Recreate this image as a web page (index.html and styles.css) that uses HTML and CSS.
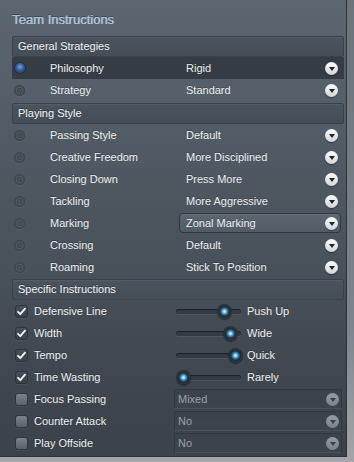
FILE: index.html
```html
<!DOCTYPE html>
<html>
<head>
<meta charset="utf-8">
<link rel="stylesheet" href="styles.css">
</head>
<body>
<div class="window">
  <h1 class="title">Team Instructions</h1>

  <section class="group">
    <div class="group-head">General Strategies</div>
    <div class="row sel"><span class="radio on"></span><span class="label">Philosophy</span><span class="select"><span class="val">Rigid</span><span class="arrow"></span></span></div>
    <div class="row"><span class="radio"></span><span class="label">Strategy</span><span class="select"><span class="val">Standard</span><span class="arrow"></span></span></div>
  </section>

  <section class="group g2">
    <div class="group-head">Playing Style</div>
    <div class="row"><span class="radio"></span><span class="label">Passing Style</span><span class="select"><span class="val">Default</span><span class="arrow"></span></span></div>
    <div class="row"><span class="radio"></span><span class="label">Creative Freedom</span><span class="select"><span class="val">More Disciplined</span><span class="arrow"></span></span></div>
    <div class="row"><span class="radio"></span><span class="label">Closing Down</span><span class="select"><span class="val">Press More</span><span class="arrow"></span></span></div>
    <div class="row"><span class="radio"></span><span class="label">Tackling</span><span class="select"><span class="val">More Aggressive</span><span class="arrow"></span></span></div>
    <div class="row"><span class="radio"></span><span class="label">Marking</span><span class="select boxed"><span class="val">Zonal Marking</span><span class="arrow"></span></span></div>
    <div class="row"><span class="radio"></span><span class="label">Crossing</span><span class="select"><span class="val">Default</span><span class="arrow"></span></span></div>
    <div class="row"><span class="radio"></span><span class="label">Roaming</span><span class="select"><span class="val">Stick To Position</span><span class="arrow"></span></span></div>
  </section>

  <section class="group g3">
    <div class="group-head">Specific Instructions</div>
    <div class="srow"><span class="check on"><svg viewBox="0 0 13 13" width="13" height="13"><path d="M3 6.8 L5.3 9.2 L10 3.6" fill="none" stroke="#f4f6f8" stroke-width="1.8" stroke-linecap="round" stroke-linejoin="round"/></svg></span><span class="label">Defensive Line</span><span class="slider"><span class="track"><span class="knob" style="left:41px"></span></span><span class="sval">Push Up</span></span></div>
    <div class="srow"><span class="check on"><svg viewBox="0 0 13 13" width="13" height="13"><path d="M3 6.8 L5.3 9.2 L10 3.6" fill="none" stroke="#f4f6f8" stroke-width="1.8" stroke-linecap="round" stroke-linejoin="round"/></svg></span><span class="label">Width</span><span class="slider"><span class="track"><span class="knob" style="left:47px"></span></span><span class="sval">Wide</span></span></div>
    <div class="srow"><span class="check on"><svg viewBox="0 0 13 13" width="13" height="13"><path d="M3 6.8 L5.3 9.2 L10 3.6" fill="none" stroke="#f4f6f8" stroke-width="1.8" stroke-linecap="round" stroke-linejoin="round"/></svg></span><span class="label">Tempo</span><span class="slider"><span class="track"><span class="knob" style="left:52px"></span></span><span class="sval">Quick</span></span></div>
    <div class="srow"><span class="check on"><svg viewBox="0 0 13 13" width="13" height="13"><path d="M3 6.8 L5.3 9.2 L10 3.6" fill="none" stroke="#f4f6f8" stroke-width="1.8" stroke-linecap="round" stroke-linejoin="round"/></svg></span><span class="label">Time Wasting</span><span class="slider"><span class="track"><span class="knob" style="left:0px"></span></span><span class="sval">Rarely</span></span></div>
    <div class="srow"><span class="check"></span><span class="label">Focus Passing</span><span class="dis"><span class="val">Mixed</span><span class="arrow off"></span></span></div>
    <div class="srow"><span class="check"></span><span class="label">Counter Attack</span><span class="dis"><span class="val">No</span><span class="arrow off"></span></span></div>
    <div class="srow"><span class="check"></span><span class="label">Play Offside</span><span class="dis"><span class="val">No</span><span class="arrow off"></span></span></div>
  </section>
</div>
</body>
</html>
```

FILE: styles.css
```css
* { box-sizing: border-box; margin: 0; padding: 0; }

body {
  width: 354px;
  height: 462px;
  overflow: hidden;
  background: linear-gradient(180deg, #6b737b 0%, #7d848b 70%, #a3a7ab 100%);
  font-family: "Liberation Sans", Arial, sans-serif;
  font-size: 11px;
  color: #eef1f3;
}

.window {
  width: 347px;
  height: 457px;
  padding: 0 2px 0 12px;
  background: linear-gradient(180deg, #5c6670 0%, #535d67 25%, #4a525b 55%, #40474f 80%, #3b4249 100%);
  border-right: 1px solid #2c3237;
  border-bottom: 1px solid #2c3237;
}

.title {
  height: 36px;
  line-height: 39px;
  font-size: 13px;
  font-weight: normal;
  color: #abc2da;
  text-shadow: 0.5px 0 0 #abc2da, 0 -1px 0 rgba(40, 46, 52, 0.6);
}

.group-head {
  height: 21px;
  line-height: 19px;
  padding-left: 5px;
  background: linear-gradient(180deg, #4b545e, #454e57);
  border: 1px solid #39414a;
  border-radius: 2px;
  box-shadow: inset 0 1px 0 rgba(255, 255, 255, 0.05);
  color: #f3f5f7;
  text-shadow: 0 -1px 0 rgba(0, 0, 0, 0.3);
}

.g2 { margin-top: 2px; }
.g3 { margin-top: 1px; }

.row {
  display: grid;
  grid-template-columns: 38px 129px 1fr;
  align-items: center;
  height: 22px;
  padding-right: 3px;
  text-shadow: 0 -1px 0 rgba(0, 0, 0, 0.25);
}

.row.sel {
  background: #363c44;
}

.radio {
  width: 11px;
  height: 11px;
  margin-left: 2px;
  border-radius: 50%;
  background: radial-gradient(circle, #48505a 0 1.5px, #3b424a 2.2px, #525a63 3.2px, #444c55 4px, #3a4148 5.5px);
  box-shadow: 0 1px 0 rgba(255, 255, 255, 0.05);
}

.radio.on {
  width: 10px;
  height: 10px;
  margin-left: 3px;
  background: radial-gradient(circle at 50% 40%, #6d92d2 0 1px, #3f64a6 3px, #2d4b80 5px);
  box-shadow: 0 0 0 1px rgba(20, 30, 50, 0.4);
}

.select {
  display: flex;
  align-items: center;
  height: 20px;
  padding: 0 3px 0 7px;
  border: 1px solid transparent;
  border-radius: 4px;
}

.select .val { margin-left: -1px; }

.select.boxed {
  background: linear-gradient(180deg, #5c6670, #535c66);
  border-color: #2f363d;
  box-shadow: inset 0 1px 0 rgba(255, 255, 255, 0.08);
}

.arrow {
  margin-left: auto;
  width: 13px;
  height: 13px;
  margin-right: -1px;
  border-radius: 50%;
  background: linear-gradient(180deg, #fafbfb, #d3d6d9);
  box-shadow: 0 1px 1px rgba(0, 0, 0, 0.35);
  display: flex;
  align-items: center;
  justify-content: center;
}

.arrow::after {
  content: "";
  width: 0;
  height: 0;
  margin-top: 1px;
  border-left: 3.5px solid transparent;
  border-right: 3.5px solid transparent;
  border-top: 4.5px solid #1f2429;
}

.arrow.off {
  background: linear-gradient(180deg, #959ba1, #7c8289);
  box-shadow: none;
}

.arrow.off::after {
  border-top-color: #3a4047;
}

.srow {
  display: grid;
  grid-template-columns: 22px 140px 1fr;
  align-items: center;
  height: 22px;
  padding-right: 2px;
  text-shadow: 0 -1px 0 rgba(0, 0, 0, 0.25);
}

.check {
  width: 13px;
  height: 13px;
  margin-left: 3px;
  border-radius: 3px;
  background: linear-gradient(180deg, #7a838c, #59616a);
  border: 1px solid #2e343a;
  box-shadow: 0 1px 0 rgba(255, 255, 255, 0.06);
  display: block;
}

.check svg { display: block; margin: -1px 0 0 -1px; }

.check.on {
  background: linear-gradient(180deg, #474f58, #3a4148);
}

.slider {
  display: flex;
  align-items: center;
}

.track {
  position: relative;
  width: 65px;
  height: 5px;
  margin-left: 2px;
  border-radius: 3px;
  background: #353b42;
  box-shadow: inset 0 1px 1px rgba(0, 0, 0, 0.5), 0 1px 0 rgba(255, 255, 255, 0.07);
}

.knob {
  position: absolute;
  top: -5px;
  width: 15px;
  height: 15px;
  border-radius: 50%;
  background: radial-gradient(circle, #d4eefa 0 0.8px, #66b3dc 1.8px, #2f7aa8 3.2px, #1f5170 4px, #20272d 4.8px, #2e353c 6px, #252b31 7.5px);
  box-shadow: 0 1px 1px rgba(0, 0, 0, 0.4);
}

.sval {
  margin-left: 6px;
}

.dis {
  display: flex;
  align-items: center;
  height: 20px;
  padding: 0 3px;
  background: linear-gradient(180deg, #3a4148, #3d444b);
  border: 1px solid #31373e;
  border-bottom-color: #4a5259;
  border-radius: 2px;
  color: #9ba2a9;
  text-shadow: none;
}
```
